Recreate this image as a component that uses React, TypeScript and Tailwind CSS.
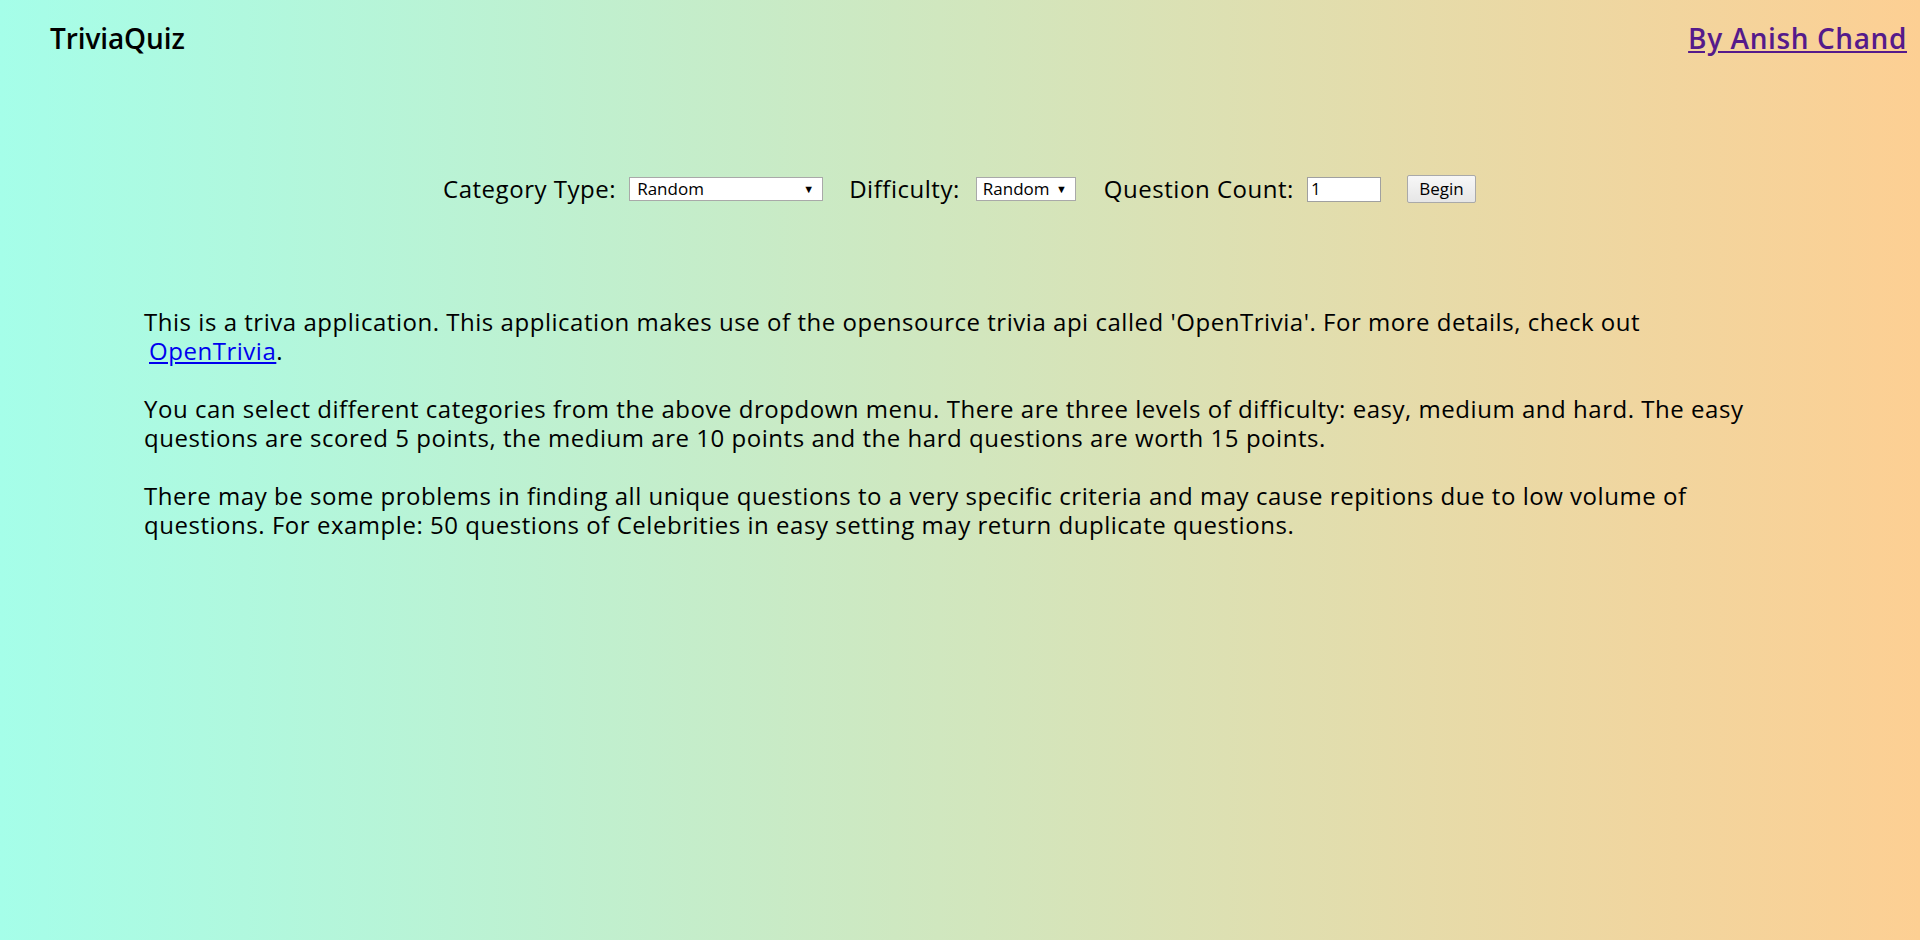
import React from "react";

const body = { fontFamily: "'Open Sans', 'Noto Sans', sans-serif" };

export default function App() {
  return (
    <div
      className="min-h-[940px] w-full bg-[linear-gradient(to_right,#a5fee9,#fdcf93)] text-black"
      style={body}
    >
      <header className="flex h-[76px] items-center justify-between pl-[50px] pr-[13px]">
        <div className="text-[28px] font-semibold tracking-[-0.1px]">TriviaQuiz</div>
        <a href="#" className="text-[28px] font-semibold tracking-[0.6px] text-[#551a8b] underline">
          By Anish Chand
        </a>
      </header>

      <div className="mt-[98px] flex items-center pl-[443px] text-[24px] leading-[30px] tracking-[0.53px]">
        <label>Category Type:</label>
        <div className="ml-[13px] flex h-[24px] w-[194px] items-center justify-between border border-[#a9a9a9] bg-white pl-[7px] pr-[8px] tracking-normal">
          <span className="text-[17px] leading-[20px]">Random</span>
          <span className="text-[11px] leading-[12px]">▼</span>
        </div>
        <label className="ml-[26px]">Difficulty:</label>
        <div className="ml-[16px] flex h-[24px] w-[100px] items-center justify-between border border-[#a9a9a9] bg-white pl-[6px] pr-[8px] tracking-normal">
          <span className="text-[17px] leading-[20px]">Random</span>
          <span className="text-[11px] leading-[12px]">▼</span>
        </div>
        <label className="ml-[28px]">Question Count:</label>
        <input
          defaultValue="1"
          className="ml-[13px] h-[25px] w-[74px] border border-[#a0a0a0] bg-white px-[3px] text-[17px] tracking-normal outline-none"
        />
        <button className="ml-[26px] h-[28px] w-[69px] rounded-[2px] border border-[#a9a9a9] bg-[linear-gradient(#f7f7f7,#e6e6e6)] text-[17px] leading-[22px] tracking-normal">
          Begin
        </button>
      </div>

      <div className="mx-[144px] mt-[103px] text-[24px] leading-[29px] tracking-[0.53px]">
        <p>
          This is a triva application. This application makes use of the opensource trivia api called
          'OpenTrivia'. For more details, check out{" "}
          <a href="#" className="ml-[5px] text-[#0000ee] underline">
            OpenTrivia
          </a>
          .
        </p>
        <p className="mt-[29px]">
          You can select different categories from the above dropdown menu. There are three levels of
          difficulty: easy, medium and hard. The easy questions are scored 5 points, the medium are 10
          points and the hard questions are worth 15 points.
        </p>
        <p className="mt-[29px]">
          There may be some problems in finding all unique questions to a very specific criteria and may
          cause repitions due to low volume of questions. For example: 50 questions of Celebrities in easy
          setting may return duplicate questions.
        </p>
      </div>
    </div>
  );
}
